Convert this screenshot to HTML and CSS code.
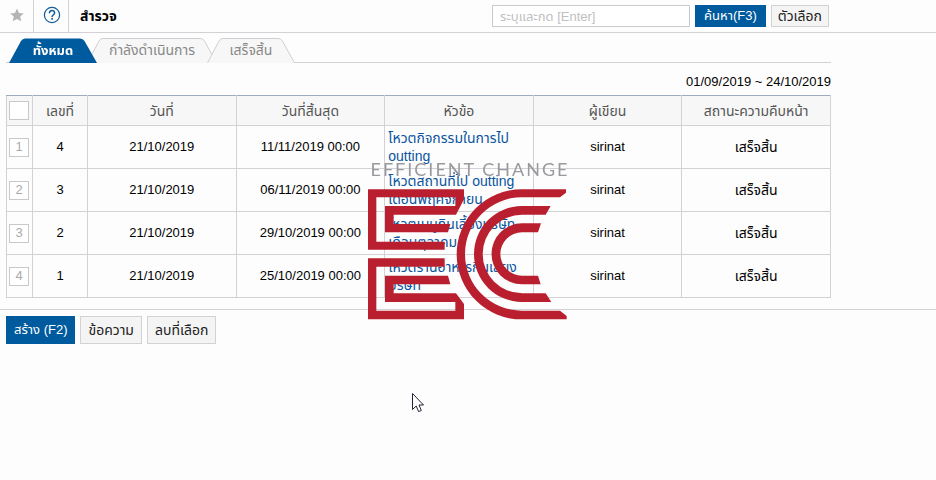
FILE: index.html
```
<!DOCTYPE html>
<html lang="th">
<head>
    <meta charset="UTF-8">
    <meta name="viewport" content="width=device-width, initial-scale=1.0">
    <title>สำรวจ</title>
    <link rel="stylesheet" href="styles.css">
</head>
<body>

<header class="topbar">
    <button class="icon-btn star" aria-label="Favorite">
        <svg width="14" height="14" viewBox="0 0 14 14"><path d="M7 0.5L9 4.9L13.8 5.4L10.2 8.6L11.3 13.3L7 10.9L2.7 13.3L3.8 8.6L0.2 5.4L5 4.9Z" fill="#b5b5b5"/></svg>
    </button>
    <button class="icon-btn help" aria-label="Help">
        <svg width="18" height="18" viewBox="0 0 18 18" fill="none" stroke="#0f5c9e">
            <circle cx="9" cy="9" r="7.6" stroke-width="1.2"/>
            <path d="M6.4 7.2C6.4 3.8 11.6 3.8 11.6 6.9C11.6 8.8 9.1 8.8 9.1 11" stroke-width="1.5"/>
            <path d="M9.1 12V13.8" stroke-width="1.6"/>
        </svg>
    </button>
    <h1>สำรวจ</h1>
    <form class="search">
        <input type="text" class="search-box" placeholder="ระบุและกด [Enter]" aria-label="ค้นหา">
        <button type="button" class="btn primary">ค้นหา(F3)</button>
        <button type="button" class="btn">ตัวเลือก</button>
    </form>
</header>

<main>
    <nav class="tabs">
        <button class="tab active">
            <svg viewBox="0 0 88 25" preserveAspectRatio="none"><path d="M0 25L12 3Q13.500 0.500 16 0.500H71Q74 0.500 75.500 3L88 25Z"/></svg>
            <span>ทั้งหมด</span>
        </button>
        <button class="tab wide">
            <svg viewBox="0 0 130 25" preserveAspectRatio="none"><path d="M0.500 25L12 3Q13.500 0.500 16 0.500H113Q116 0.500 117.500 3L129.500 25"/></svg>
            <span>กำลังดำเนินการ</span>
        </button>
        <button class="tab">
            <svg viewBox="0 0 88 25" preserveAspectRatio="none"><path d="M0.500 25L12 3Q13.500 0.500 16 0.500H71Q74 0.500 75.500 3L87.500 25"/></svg>
            <span>เสร็จสิ้น</span>
        </button>
    </nav>

    <p class="period">01/09/2019 ~ 24/10/2019</p>

    <table>
        <colgroup>
            <col class="col-check">
            <col class="col-no">
            <col><col><col><col><col>
        </colgroup>
        <thead>
            <tr>
                <th><label class="check"><input type="checkbox" aria-label="เลือกทั้งหมด"></label></th>
                <th>เลขที่</th>
                <th>วันที่</th>
                <th>วันที่สิ้นสุด</th>
                <th>หัวข้อ</th>
                <th>ผู้เขียน</th>
                <th>สถานะความคืบหน้า</th>
            </tr>
        </thead>
        <tbody>
            <tr>
                <td><label class="check"><input type="checkbox"><span>1</span></label></td>
                <td>4</td>
                <td>21/10/2019</td>
                <td>11/11/2019 00:00</td>
                <td class="topic"><a href="#">โหวตกิจกรรมในการไป<br>outting</a></td>
                <td>sirinat</td>
                <td class="status">เสร็จสิ้น</td>
            </tr>
            <tr>
                <td><label class="check"><input type="checkbox"><span>2</span></label></td>
                <td>3</td>
                <td>21/10/2019</td>
                <td>06/11/2019 00:00</td>
                <td class="topic"><a href="#">โหวตสถานที่ไป outting<br>เดือนพฤศจิกายน</a></td>
                <td>sirinat</td>
                <td class="status">เสร็จสิ้น</td>
            </tr>
            <tr>
                <td><label class="check"><input type="checkbox"><span>3</span></label></td>
                <td>2</td>
                <td>21/10/2019</td>
                <td>29/10/2019 00:00</td>
                <td class="topic"><a href="#">โหวตเมนูกินเลี้ยงบริษัท<br>เดือนตุลาคม</a></td>
                <td>sirinat</td>
                <td class="status">เสร็จสิ้น</td>
            </tr>
            <tr>
                <td><label class="check"><input type="checkbox"><span>4</span></label></td>
                <td>1</td>
                <td>21/10/2019</td>
                <td>25/10/2019 00:00</td>
                <td class="topic"><a href="#">โหวตร้านอาหารกินเลี้ยง<br>บริษัท</a></td>
                <td>sirinat</td>
                <td class="status">เสร็จสิ้น</td>
            </tr>
        </tbody>
    </table>
</main>

<footer class="actions">
    <button class="btn primary">สร้าง (F2)</button>
    <button class="btn">ข้อความ</button>
    <button class="btn">ลบที่เลือก</button>
</footer>

<!-- Watermark -->
<div class="watermark">
    <div class="brand">EFFICIENT CHANGE</div>
    <svg class="logo" width="199" height="132" viewBox="24 24 597 396" fill="#b91f2e">
        <path d="M24 28H312V58L288 104H101V132H271L264 157H75V78H286V52H49V185H254V209H24Z"/>
        <path d="M24 235H254V260H49V392H286V366H75V287H264L271 313H101V340H288L312 372V418H24Z"/>
        <path d="M618 28V38L600 52H485A170 170 0 0 0 485 392H600L620 408V418H485A195 195 0 0 1 485 28Z"/>
        <path d="M572 78L557 104H486A118 118 0 0 0 486 340H557L574 366H486A144 144 0 0 1 486 78Z"/>
        <path d="M543 130L534 157H486A65 65 0 0 0 486 287H534L542 313H486A91 91 0 0 1 486 130Z"/>
    </svg>
</div>

<svg class="pointer" width="12" height="20" viewBox="0 0 12 20"><path d="M0.500 0.500V16.500L4.200 13L6.600 18.600L9.300 17.500L7 12H11.500Z" fill="#fff" stroke="#223"/></svg>

</body>
</html>
```
FILE: styles.css
```
* {
    box-sizing: border-box;
}
body {
    margin: 0;
    background-color: #fdfdfd;
    color: #000;
    font-family: "Liberation Sans", "Noto Sans Thai", "Noto Sans", sans-serif;
    font-size: 13px;
    line-height: 18px;
}
button, input {
    font-family: inherit;
    font-size: 14px;
}

/* Top bar */
.topbar {
    display: flex;
    align-items: center;
    height: 33px;
    padding-right: 107px;
    border-bottom: 1px solid #d2d2d6;
}
.icon-btn {
    display: flex;
    align-items: center;
    justify-content: center;
    height: 32px;
    padding: 0 0 2px;
    border: none;
    border-right: 1px solid #d2d2d6;
    background: none;
}
.star {
    width: 34px;
}
.help {
    width: 35px;
    padding-left: 2px;
}
h1 {
    margin: 0 auto 0 11px;
    font-size: 14px;
    font-weight: bold;
}
.search {
    display: flex;
    gap: 5px;
}
.search-box {
    width: 198px;
    height: 22px;
    padding: 0 7px;
    border: 1px solid #c9cacd;
    background: #fff;
    font-size: 13px;
}
.search-box::placeholder {
    color: #c0c0c0;
}
.btn {
    height: 22px;
    padding: 0 7px;
    border: 1px solid #d2d2d2;
    background-color: #f4f4f4;
    color: #222;
    white-space: nowrap;
}
.btn.primary {
    border-color: #005a9e;
    background-color: #005a9e;
    color: #fff;
    font-size: 13px;
}
.search .btn {
    padding: 0 6px;
}
.search .btn.primary {
    padding: 0 8px;
}

/* Tabs */
main {
    padding: 5px 105px 0 6px;
}
.tabs {
    display: flex;
    height: 25px;
    padding-left: 3px;
    border-bottom: 1px solid #d2d2d6;
}
.tab {
    position: relative;
    width: 88px;
    height: 25px;
    margin-right: -10px;
    padding: 0;
    border: none;
    background: none;
    color: #888;
}
.tab.wide {
    width: 130px;
}
.tab svg {
    position: absolute;
    top: 0;
    left: 0;
    width: 100%;
    height: 100%;
    fill: #f7f7f7;
    stroke: #cfcfd3;
}
.tab span {
    position: relative;
}
.tab.active {
    z-index: 1;
    color: #fff;
    font-size: 13px;
    font-weight: bold;
}
.tab.active svg {
    fill: #005a9e;
    stroke: none;
}
.period {
    margin: 10px 0 4px;
    text-align: right;
}

/* Table */
table {
    width: 100%;
    border-collapse: collapse;
    table-layout: fixed;
}
.col-check {
    width: 26px;
}
.col-no {
    width: 55px;
}
th, td {
    padding: 3px;
    border: 1px solid #d2d2d6;
    text-align: center;
}
th {
    height: 30px;
    border-top-color: #9cabbd;
    background-color: #f7f7f7;
    color: #555;
    font-size: 14px;
    font-weight: normal;
}
td {
    height: 43px;
}
th:first-child, td:first-child {
    padding: 0 3px 0 2px;
}
.check {
    display: grid;
    place-items: center;
}
.check input, .check span {
    grid-area: 1 / 1;
}
.check input {
    appearance: none;
    width: 20px;
    height: 19px;
    margin: 0;
    border: 1px solid #c9c9c9;
    background: #fff;
}
.check span {
    color: #aaa;
}
.topic {
    font-size: 14px;
    text-align: left;
}
.topic a {
    color: #0b559f;
    text-decoration: none;
}
.status {
    font-size: 14px;
}

/* Bottom buttons */
.actions {
    display: flex;
    gap: 5px;
    margin-top: 11px;
    padding: 6px;
    border-top: 1px solid #d2d2d6;
}
.actions .btn {
    height: 28px;
}

.watermark {
    position: fixed;
    inset: 0;
    display: flex;
    flex-direction: column;
    align-items: center;
    justify-content: center;
    pointer-events: none;
}
.brand {
    height: 28px;
    padding-left: 4px;
    color: #9a9a9e;
    font-family: Lato, sans-serif;
    font-size: 18px;
    letter-spacing: 2px;
    white-space: nowrap;
}
.logo {
    margin-right: 2px;
}
.pointer {
    position: absolute;
    top: 393px;
    left: 412px;
}
```
